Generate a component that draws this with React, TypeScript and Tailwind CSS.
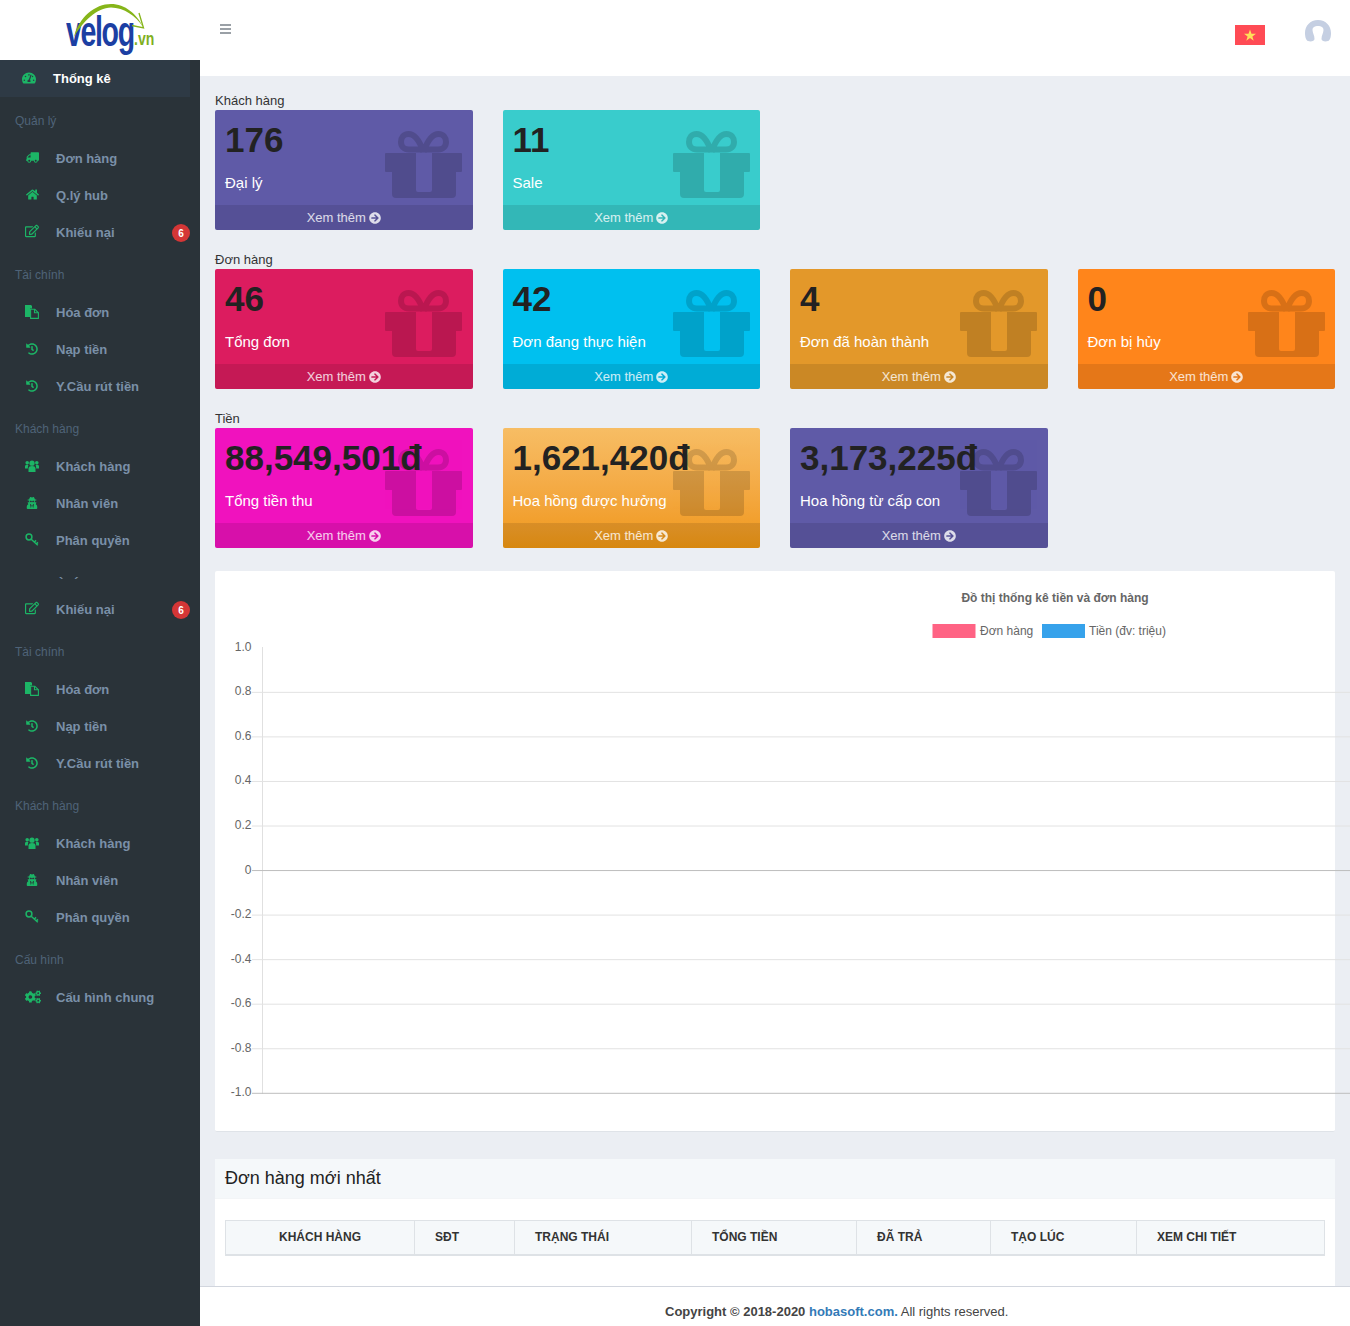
import React from "react";
import { FaTachometerAlt, FaTruck, FaHome, FaRegEdit, FaHistory, FaUserSecret, FaCogs, FaArrowCircleRight } from "react-icons/fa";

const FilesIcon = () => (
  <svg viewBox="0 0 14 14" className="w-[14px] h-[14px]" fill="none">
    <path d="M0 0h6l1 1v2.5H5V12H0z" fill="currentColor" />
    <path d="M5.6 4.2h4.2l3.6 3.6v5.6H5.6z" stroke="currentColor" strokeWidth="1.1" />
    <path d="M9.5 4.2v3.6h3.9" stroke="currentColor" strokeWidth="1.1" />
  </svg>
);
const KeyIcon = () => (
  <svg viewBox="0 0 14 14" className="w-[14px] h-[14px]" fill="none" stroke="currentColor" strokeWidth="1.5">
    <circle cx="4" cy="4" r="2.9" />
    <path d="M6.2 6.2l6.6 6M9.3 9l1.8-1.6M11.4 10.9l1.6-1.5" />
  </svg>
);
const UsersIcon = () => (
  <svg viewBox="0 0 14 12" className="w-[14px] h-[12px]" fill="currentColor">
    <circle cx="7" cy="3.2" r="2.6" />
    <path d="M3.5 12V8.500C3.500 6.800 5 6 7 6s3.500.8 3.500 2.500V12z" />
    <circle cx="2.200" cy="2.800" r="1.800" />
    <circle cx="11.800" cy="2.800" r="1.800" />
    <path d="M0 8.500V6.300C0 5.300 1 4.800 2 4.800c.6 0 1 .1 1.400.3C3 6 2.800 7 2.800 8.500zM14 8.500V6.300c0-1-1-1.500-2-1.500-.6 0-1 .1-1.400.3.400.9.600 1.900.600 3.400z" />
  </svg>
);

const Gift = () => (
  <svg viewBox="0 0 78 68" className="absolute left-[170px] top-[20px] w-[78px] h-[68px] opacity-[0.15]" fill="none">
    <path
      d="M38.500 22 C35 12 30 4 23.500 4 C18.500 4 16 8 16 12 C16 16.500 19 19.500 24 19.500 H53 C58 19.500 61 16.500 61 12 C61 8 58.500 4 53.500 4 C47 4 42 12 38.500 22"
      stroke="#000"
      strokeWidth="6"
    />
    <path
      fillRule="evenodd"
      d="M0 24a1 1 0 0 1 1-1h75a1 1 0 0 1 1 1v17a1 1 0 0 1-1 1h-5v22a4 4 0 0 1-4 4H11a4 4 0 0 1-4-4V42H1a1 1 0 0 1-1-1z M31 23v37a2 2 0 0 0 2 2h12a2 2 0 0 0 2-2V23z"
      fill="#000"
    />
  </svg>
);

type CardT = { n: string; t: string; bg: string };

const Card = ({ c }: { c: CardT }) => (
  <div className={`relative h-[120px] rounded-[2px] overflow-hidden flex flex-col ${c.bg}`}>
    <Gift />
    <div className="relative flex-1 pl-[10px] pt-[10px]">
      <div className="text-[35px] leading-[40px] font-bold text-[#222222] whitespace-nowrap">{c.n}</div>
      <div className="text-[15px] leading-[20px] mt-[13px] text-white">{c.t}</div>
    </div>
    <div className="relative h-[25px] flex items-center justify-center gap-[3px] text-[13px] text-white/80 bg-black/10">
      Xem thêm <FaArrowCircleRight className="w-[12px] h-[12px]" />
    </div>
  </div>
);

const PURPLE = { bg: "bg-[#5f5aa7]" };

const rows: { label: string; cards: (CardT | null)[] }[] = [
  {
    label: "Khách hàng",
    cards: [
      { n: "176", t: "Đại lý", ...PURPLE },
      { n: "11", t: "Sale", bg: "bg-[#39cccc]" },
      null,
      null,
    ],
  },
  {
    label: "Đơn hàng",
    cards: [
      { n: "46", t: "Tổng đơn", bg: "bg-[#dc1c5f]" },
      { n: "42", t: "Đơn đang thực hiện", bg: "bg-[#00c0ef]" },
      { n: "4", t: "Đơn đã hoàn thành", bg: "bg-[#e3982a]" },
      { n: "0", t: "Đơn bị hủy", bg: "bg-[#ff851b]" },
    ],
  },
  {
    label: "Tiền",
    cards: [
      { n: "88,549,501đ", t: "Tổng tiền thu", bg: "bg-[#f012be]" },
      { n: "1,621,420đ", t: "Hoa hồng được hưởng", bg: "bg-gradient-to-b from-[#f7bd64] to-[#f09710]" },
      { n: "3,173,225đ", t: "Hoa hồng từ cấp con", ...PURPLE },
      null,
    ],
  },
];

const NavHead = ({ t }: { t: string }) => (
  <div className="h-[43px] pt-[5px] pl-[15px] flex items-center text-[12px] text-[#4f6378]">{t}</div>
);
const NavItem = ({ icon, t, badge }: { icon: React.ReactNode; t: string; badge?: boolean }) => (
  <div className="h-[37px] flex items-center relative text-[13px] font-bold text-[#7a90a8]">
    <span className="w-[56px] pl-[25px] pb-[2px] flex text-[#1cb566]">{icon}</span>
    {t}
    {badge && (
      <span className="absolute left-[172px] top-[10px] w-[18px] h-[18px] rounded-full bg-[#d43636] text-white text-[10px] flex items-center justify-center">6</span>
    )}
  </div>
);

const I = {
  truck: <FaTruck className="w-[13px] h-[13px] -scale-x-100 ml-[1px]" />,
  home: <FaHome className="w-[13px] h-[13px] ml-[1px]" />,
  edit: <FaRegEdit className="w-[14px] h-[14px] mb-[1px]" />,
  hist: <FaHistory className="w-[12px] h-[12px] ml-[1px]" />,
  users: <UsersIcon />,
  secret: <FaUserSecret className="w-[12px] h-[12px] ml-[1px]" />,
  key: <KeyIcon />,
  files: <FilesIcon />,
  cogs: <FaCogs className="w-[16px] h-[16px]" />,
};

const FinanceAndUsers = () => (
  <>
    <NavHead t="Tài chính" />
    <NavItem icon={I.files} t="Hóa đơn" />
    <NavItem icon={I.hist} t="Nạp tiền" />
    <NavItem icon={I.hist} t="Y.Cầu rút tiền" />
    <NavHead t="Khách hàng" />
    <NavItem icon={I.users} t="Khách hàng" />
    <NavItem icon={I.secret} t="Nhân viên" />
    <NavItem icon={I.key} t="Phân quyền" />
  </>
);

const Logo = () => (
  <div className="relative ml-[20px] w-[90px] h-[56px]">
    <div className="absolute left-[1px] top-[6px] origin-left scale-x-[0.68] font-bold text-[#1c3fa3] text-[42px] leading-[50px] tracking-[-2px] whitespace-nowrap">
      velog
    </div>
    <div className="absolute left-[69px] top-[28px] origin-left scale-x-[0.78] font-bold text-[#7fb01f] text-[18px] leading-[20px] whitespace-nowrap">
      .vn
    </div>
    <svg viewBox="0 0 90 56" className="absolute inset-0 w-[90px] h-[56px]" fill="none">
      <path d="M9 36 C14 16 30 3 46 3 C60 3 72 13 78 26 C71 15 59 6.500 46 6.500 C32 7 18 20 9 36z" fill="#86b51a" />
      <path d="M74 12 L78.500 27 L67 24.500" stroke="#86b51a" strokeWidth="1.300" />
    </svg>
  </div>
);

const yTicks = ["1.0", "0.8", "0.6", "0.4", "0.2", "0", "-0.2", "-0.4", "-0.6", "-0.8", "-1.0"];

const Chart = () => (
  <svg width="1120" height="560" className="block overflow-visible">
    <text x="840" y="31" textAnchor="middle" fontSize="12" fontWeight="bold" fill="#666">Đồ thị thống kê tiền và đơn hàng</text>
    <rect x="717.500" y="53" width="43" height="14" fill="#ff6384" />
    <text x="765" y="64" fontSize="12" fill="#666">Đơn hàng</text>
    <rect x="827" y="53" width="43" height="14" fill="#36a2eb" />
    <text x="874" y="64" fontSize="12" fill="#666">Tiền (đv: triệu)</text>
    <line x1="47.500" x2="47.500" y1="76" y2="523" stroke="#e0e0e0" />
    {yTicks.map((t, i) => {
      const y = 76.8 + i * 44.55;
      return (
        <g key={t}>
          {i > 0 && <line x1="37" x2="1135" y1={y} y2={y} stroke={t === "0" || t === "-1.0" ? "#bdbdbd" : "#e2e2e2"} />}
          <text x="36.500" y={y + 3} textAnchor="end" fontSize="12" fill="#666">{t}</text>
        </g>
      );
    })}
  </svg>
);

const cols = [
  { t: "KHÁCH HÀNG", w: "w-[189px]", c: "text-center" },
  { t: "SĐT", w: "w-[100px]", c: "text-left pl-[20px]" },
  { t: "TRẠNG THÁI", w: "w-[177px]", c: "text-left pl-[20px]" },
  { t: "TỔNG TIỀN", w: "w-[165px]", c: "text-left pl-[20px]" },
  { t: "ĐÃ TRẢ", w: "w-[134px]", c: "text-left pl-[20px]" },
  { t: "TẠO LÚC", w: "w-[146px]", c: "text-left pl-[20px]" },
  { t: "XEM CHI TIẾT", w: "w-[188px]", c: "text-left pl-[20px]" },
];

export default function App() {
  return (
    <div className="h-[1326px] w-full flex overflow-hidden bg-[#ebeef3] font-['Liberation_Sans',Arial,sans-serif]">
      <aside className="w-[200px] shrink-0 bg-[#2a3339]">
        <div className="h-[60px] bg-white flex justify-center pt-[1px]">
          <Logo />
        </div>
        <div className="h-[37px] w-[190px] bg-[#2e3a45] flex items-center text-[13px] font-bold text-white">
          <span className="w-[53px] pl-[22px] pb-[2px] flex text-[#1cb566]"><FaTachometerAlt className="w-[14px] h-[14px]" /></span>
          Thống kê
        </div>
        <NavHead t="Quản lý" />
        <NavItem icon={I.truck} t="Đơn hàng" />
        <NavItem icon={I.home} t="Q.lý hub" />
        <NavItem icon={I.edit} t="Khiếu nại" badge />
        <FinanceAndUsers />
        <div className="h-[32px] pl-[59px] pt-[17px] flex gap-[11px] text-[13px] leading-[14px] font-bold text-[#7a90a8]">
          <span>`</span>
          <span>´</span>
        </div>
        <NavItem icon={I.edit} t="Khiếu nại" badge />
        <FinanceAndUsers />
        <NavHead t="Cấu hình" />
        <NavItem icon={I.cogs} t="Cấu hình chung" />
      </aside>

      <div className="flex-1 min-w-0 flex flex-col">
        <header className="h-[76px] shrink-0 bg-white relative flex items-start">
          <svg viewBox="0 0 11 10" className="ml-[20px] mt-[24px] w-[11px] h-[10px]" fill="#9aa0a6">
            <rect width="11" height="2" />
            <rect y="4" width="11" height="2" />
            <rect y="8" width="11" height="2" />
          </svg>
          <svg viewBox="0 0 30 20" className="ml-[1004px] mt-[25px] w-[30px] h-[20px]">
            <rect width="30" height="20" fill="#ff4b55" />
            <path d="M15 4.500l1.500 4.200h4.500l-3.600 2.700 1.300 4.300L15 13l-3.700 2.700 1.300-4.300L9 8.700h4.500z" fill="#ffe15a" />
          </svg>
          <svg viewBox="0 0 26 22" className="ml-[40px] mt-[20px] w-[26px] h-[22px]">
            <path d="M13 0C5 0 0 6 0 13c0 4 1 7.500 3 8 3 1 6.500 0 6.500-2 0-4-2-6-2-9 0-3 2.500-4 5.500-4s5.500 1 5.500 4c0 3-2 5-2 9 0 2 3.500 3 6.500 2 2-.5 3-4 3-8C26 6 21 0 13 0z" fill="#c5cfe2" />
          </svg>
        </header>

        <main className="flex-1 min-h-0 overflow-hidden px-[15px] pt-[16px]">
          {rows.map((r, i) => (
            <section key={r.label} className={i > 0 ? "mt-[21px]" : ""}>
              <div className="h-[18px] text-[13px] leading-[18px] text-[#333333]">{r.label}</div>
              <div className="grid grid-cols-4 gap-x-[30px]">
                {r.cards.map((c, j) => (c ? <Card key={j} c={c} /> : <div key={j} />))}
              </div>
            </section>
          ))}

          <div className="mt-[23px] h-[560px] box-content bg-white rounded-[2px] border-b border-[#dfe3e8]">
            <Chart />
          </div>

          <div className="mt-[27px] bg-white rounded-[2px] pb-[60px]">
            <div className="h-[40px] bg-[#f5f8fa] px-[10px] flex items-center text-[18px] text-[#222222] border-b border-[#f3f5f7]">Đơn hàng mới nhất</div>
            <div className="px-[10px] pt-[21px]">
              <table className="w-[1099px] table-fixed border-collapse text-[12px] font-bold text-[#333333]">
                <thead>
                  <tr className="h-[34px] bg-[#f5f8fa]">
                    {cols.map((c) => (
                      <th key={c.t} className={`${c.w} ${c.c} font-bold border border-[#dee2e6] border-b-2 p-0`}>{c.t}</th>
                    ))}
                  </tr>
                </thead>
              </table>
            </div>
          </div>
        </main>

        <footer className="h-[40px] shrink-0 bg-white border-t border-[#d2d6de] pt-[17px] pl-[465px] text-[13px] leading-[16px] text-[#444444]">
          <b>Copyright © 2018-2020 <span className="text-[#337ab7]">hobasoft.com.</span></b> All rights reserved.
        </footer>
      </div>
    </div>
  );
}
